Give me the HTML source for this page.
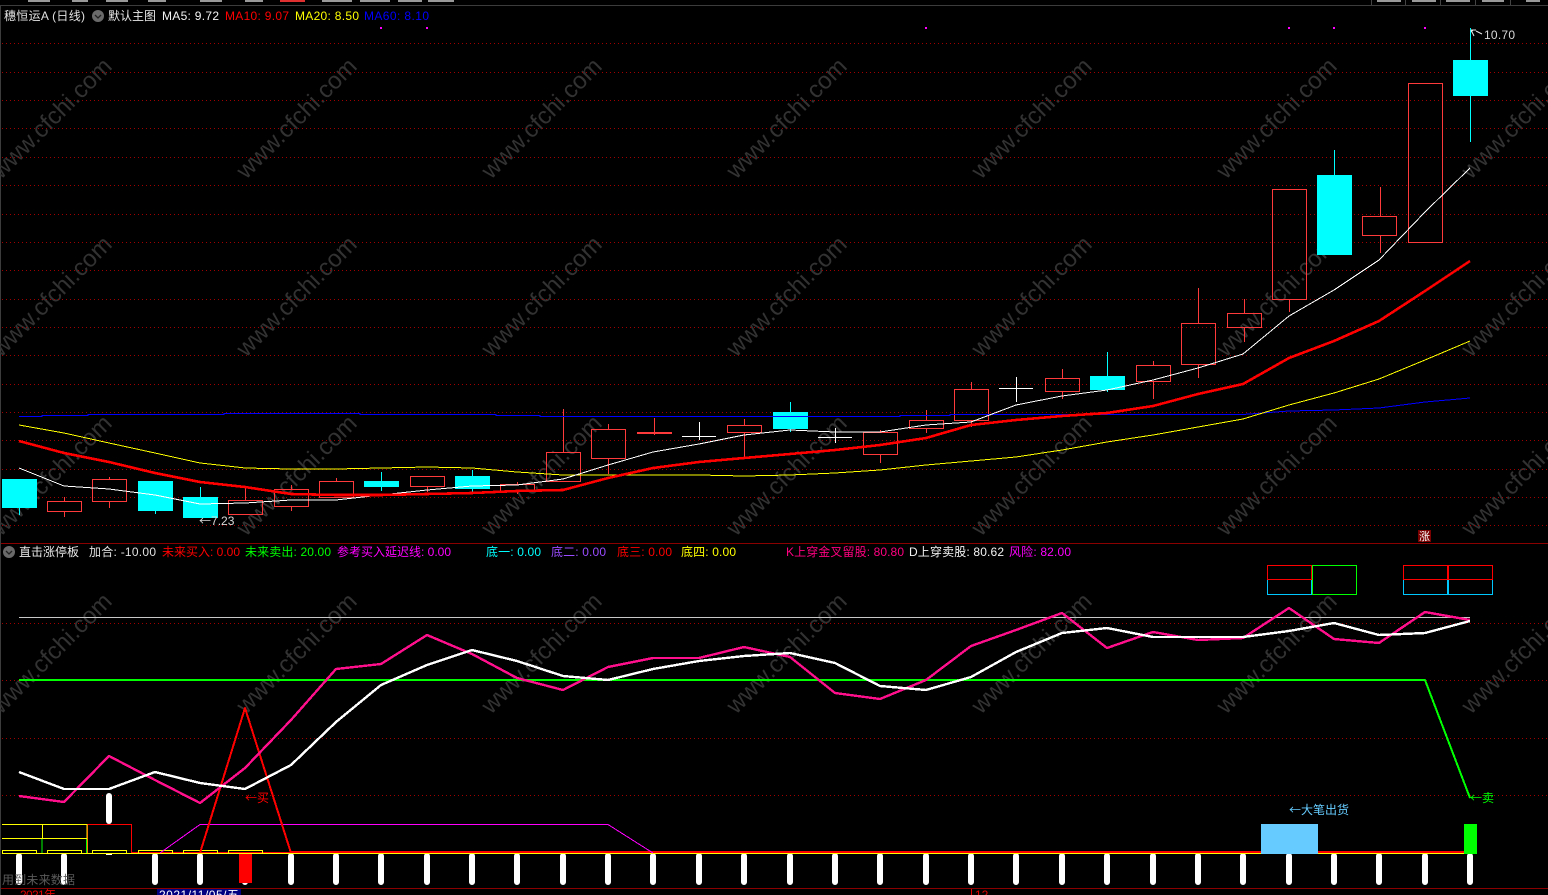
<!DOCTYPE html>
<html>
<head>
<meta charset="utf-8">
<title>chart</title>
<style>
html,body{margin:0;padding:0;background:#000;width:1548px;height:895px;overflow:hidden}
svg{display:block;position:absolute;left:0;top:0}
text{font-family:"Liberation Sans","Noto Sans CJK SC",sans-serif;font-size:12px}
.wm text{font-size:24px;fill:#323232}
.ar{font-family:"Noto Sans CJK SC",sans-serif}
</style>
</head>
<body>
<svg width="1548" height="895" viewBox="0 0 1548 895">
<rect width="1548" height="895" fill="#000"/>

<!-- top strip -->
<g shape-rendering="crispEdges">
<rect x="0" y="5" width="1548" height="1" fill="#3c3c3c"/>
<rect x="0" y="6" width="1" height="889" fill="#3c3c3c"/>
<g fill="#999">
<rect x="28" y="0" width="22" height="2"/><rect x="72" y="0" width="16" height="2"/><rect x="106" y="0" width="22" height="2"/><rect x="148" y="0" width="18" height="2"/><rect x="200" y="0" width="22" height="2"/><rect x="245" y="0" width="18" height="2"/>
<rect x="322" y="0" width="30" height="2"/><rect x="360" y="0" width="30" height="2"/><rect x="398" y="0" width="24" height="2"/><rect x="428" y="0" width="26" height="2"/>
<rect x="1377" y="0" width="24" height="2"/><rect x="1412" y="0" width="24" height="2"/><rect x="1446" y="0" width="24" height="2"/><rect x="1482" y="0" width="22" height="2"/><rect x="1526" y="0" width="14" height="2"/>
</g>
<rect x="280" y="0" width="25" height="2" fill="#e03030"/>
<g fill="#444"><rect x="1371" y="0" width="1" height="5"/><rect x="1405" y="0" width="1" height="5"/><rect x="1440" y="0" width="1" height="5"/><rect x="1475" y="0" width="1" height="5"/><rect x="1510" y="0" width="1" height="5"/></g>
</g>

<!-- watermark -->
<g class="wm">
<text transform="translate(1,180) rotate(-45)">www.cfchi.com</text>
<text transform="translate(246,180) rotate(-45)">www.cfchi.com</text>
<text transform="translate(491,180) rotate(-45)">www.cfchi.com</text>
<text transform="translate(736,180) rotate(-45)">www.cfchi.com</text>
<text transform="translate(981,180) rotate(-45)">www.cfchi.com</text>
<text transform="translate(1226,180) rotate(-45)">www.cfchi.com</text>
<text transform="translate(1471,180) rotate(-45)">www.cfchi.com</text>
<text transform="translate(1,358) rotate(-45)">www.cfchi.com</text>
<text transform="translate(246,358) rotate(-45)">www.cfchi.com</text>
<text transform="translate(491,358) rotate(-45)">www.cfchi.com</text>
<text transform="translate(736,358) rotate(-45)">www.cfchi.com</text>
<text transform="translate(981,358) rotate(-45)">www.cfchi.com</text>
<text transform="translate(1226,358) rotate(-45)">www.cfchi.com</text>
<text transform="translate(1471,358) rotate(-45)">www.cfchi.com</text>
<text transform="translate(1,537) rotate(-45)">www.cfchi.com</text>
<text transform="translate(246,537) rotate(-45)">www.cfchi.com</text>
<text transform="translate(491,537) rotate(-45)">www.cfchi.com</text>
<text transform="translate(736,537) rotate(-45)">www.cfchi.com</text>
<text transform="translate(981,537) rotate(-45)">www.cfchi.com</text>
<text transform="translate(1226,537) rotate(-45)">www.cfchi.com</text>
<text transform="translate(1471,537) rotate(-45)">www.cfchi.com</text>
<text transform="translate(1,715) rotate(-45)">www.cfchi.com</text>
<text transform="translate(246,715) rotate(-45)">www.cfchi.com</text>
<text transform="translate(491,715) rotate(-45)">www.cfchi.com</text>
<text transform="translate(736,715) rotate(-45)">www.cfchi.com</text>
<text transform="translate(981,715) rotate(-45)">www.cfchi.com</text>
<text transform="translate(1226,715) rotate(-45)">www.cfchi.com</text>
<text transform="translate(1471,715) rotate(-45)">www.cfchi.com</text>
</g>

<!-- grid -->
<g shape-rendering="crispEdges">
<path stroke="#a00000" stroke-dasharray="1 3" fill="none" d="M2 43.5H1548M2 72.5H1548M2 100.5H1548M2 128.5H1548M2 157.5H1548M2 185.5H1548M2 214.5H1548M2 242.5H1548M2 270.5H1548M2 299.5H1548M2 327.5H1548M2 355.5H1548M2 384.5H1548M2 412.5H1548M2 440.5H1548M2 469.5H1548M2 497.5H1548M2 525.5H1548M2 623.5H1548M2 680.5H1548M2 738.5H1548M2 795.5H1548"/>
<rect x="1" y="543" width="1547" height="1" fill="#8a0000"/>
<rect x="1" y="888" width="1547" height="1" fill="#8a0000"/>
<g fill="#ff00ff"><rect x="380" y="27" width="2" height="2"/><rect x="426" y="27" width="2" height="2"/><rect x="925" y="27" width="2" height="2"/><rect x="1288" y="27" width="2" height="2"/><rect x="1333" y="27" width="2" height="2"/><rect x="1424" y="27" width="2" height="2"/></g>
</g>

<!-- candles -->
<g shape-rendering="crispEdges">
<path fill="none" stroke="#ff3a3a" d="M64.5 497V501M64.5 511V517M109.5 477V479M109.5 501V508M245.5 486V500M291.5 485V489M291.5 506V511M336.5 478V481M336.5 497V498M427.5 476V477M427.5 487V492M517.5 482V484M517.5 491V494M563.5 409V452M608.5 424V429M608.5 458V474M654.5 418V432M654.5 434V435M744.5 419V425M744.5 432V457M880.5 430V432M880.5 454V463M926.5 410V420M926.5 428V433M971.5 382V389M971.5 420V427M1062.5 369V378M1062.5 391V399M1153.5 361V365M1153.5 381V399M1198.5 288V323M1198.5 364V378M1244.5 299V313M1244.5 327V342M1289.5 299V312M1380.5 187V216M1380.5 235V253"/>
<g fill="none" stroke="#ff3a3a">
<rect x="47.5" y="501.5" width="34" height="10"/>
<rect x="92.5" y="479.5" width="34" height="22"/>
<rect x="228.5" y="500.5" width="34" height="14"/>
<rect x="274.5" y="489.5" width="34" height="17"/>
<rect x="319.5" y="481.5" width="34" height="16"/>
<rect x="410.5" y="476.5" width="34" height="10"/>
<rect x="500.5" y="484.5" width="34" height="7"/>
<rect x="546.5" y="452.5" width="34" height="29"/>
<rect x="591.5" y="429.5" width="34" height="29"/>
<rect x="727.5" y="425.5" width="34" height="7"/>
<rect x="863.5" y="432.5" width="34" height="22"/>
<rect x="909.5" y="420.5" width="34" height="8"/>
<rect x="954.5" y="389.5" width="34" height="31"/>
<rect x="1045.5" y="378.5" width="34" height="13"/>
<rect x="1136.5" y="365.5" width="34" height="16"/>
<rect x="1181.5" y="323.5" width="34" height="41"/>
<rect x="1227.5" y="313.5" width="34" height="14"/>
<rect x="1272.5" y="189.5" width="34" height="110"/>
<rect x="1362.5" y="216.5" width="34" height="19"/>
<rect x="1408.5" y="83.5" width="34" height="159"/>
</g>
<rect x="637" y="432" width="35" height="2" fill="#ff3a3a"/>
<path fill="none" stroke="#00ffff" d="M19.5 508V515M155.5 511V514M200.5 487V497M381.5 472V491M472.5 470V492M790.5 402V432M1107.5 352V392M1334.5 150V175M1470.5 28V142"/>
<g fill="#00ffff">
<rect x="2" y="479" width="35" height="29"/>
<rect x="138" y="481" width="35" height="30"/>
<rect x="183" y="497" width="35" height="21"/>
<rect x="364" y="481" width="35" height="6"/>
<rect x="455" y="476" width="35" height="13"/>
<rect x="773" y="412" width="35" height="17"/>
<rect x="1090" y="376" width="35" height="14"/>
<rect x="1317" y="175" width="35" height="80"/>
<rect x="1453" y="60" width="35" height="36"/>
</g>
<path fill="none" stroke="#fff" d="M682 436.5H716M699.5 422V440M818 437.5H852M835.5 428V443M999 388.5H1033M1016.5 377V402"/>
</g>

<!-- MA lines -->
<g fill="none" shape-rendering="crispEdges" stroke-linejoin="round">
<path stroke="#0000ff" d="M19 416.5H42V415.5H88V414.5H224V413.5H360V414.5H496V415.5H540V416.5H900V415.5H950V414.5H1243L1289 411L1334 410L1379 408L1425 402L1470 398"/>
<polyline stroke="#ffff00" stroke-width="1" points="19,425 64,433 109,443 155,453 200,463 245,468 291,469 336,469 381,468 427,467 472,468 517,472 563,475 608,475 653,475 699,475 744,476 790,475 835,473 880,470 926,465 971,461 1016,457 1062,450 1107,442 1153,435 1198,427 1243,419 1289,405 1334,393 1379,379 1425,360 1470,341"/>
<polyline stroke="#ffffff" stroke-width="1" points="19,468 64,486 109,489 155,495 200,504 245,503 291,500 336,500 381,495 427,490 472,486 517,485 563,479 608,465 653,452 699,444 744,435 790,430 835,432 880,432 926,425 971,422 1016,405 1062,396 1107,390 1153,380 1198,368 1243,354 1289,316 1334,290 1379,260 1425,212 1470,168"/>
<polyline stroke="#ff0000" stroke-width="2.6" points="19,441 64,453 109,462 155,473 200,482 245,487 291,494 336,495 381,495 427,494 472,493 517,491 563,490 608,478 653,468 699,462 744,458 790,454 835,450 880,445 926,438 971,425 1016,420 1062,416 1107,413 1153,406 1198,394 1243,384 1289,358 1334,341 1379,321 1425,291 1470,261"/>
</g>

<!-- price labels -->
<path fill="none" stroke="#e8e8e8" d="M1471 30H1476M1471 32L1473 30M1476 31L1482 34M1471 30L1474 36"/>
<text x="1484" y="39" fill="#d8d8d8" textLength="31">10.70</text>
<text x="199" y="525" fill="#d8d8d8"><tspan class="ar">←</tspan>7.23</text>
<rect x="1418" y="530" width="13" height="12" fill="#7a0000"/>
<text x="1419" y="540" fill="#fff" style="font-size:11px">涨</text>

<!-- header -->
<g>
<text x="4" y="20" fill="#e0e0e0" textLength="81">穗恒运A (日线)</text>
<circle cx="98" cy="16" r="6" fill="#6a6a6a"/>
<path d="M95 15l3 3l3-3" fill="none" stroke="#222" stroke-width="1.3"/>
<text x="108" y="20" fill="#e8e8e8" textLength="48">默认主图</text>
<text x="162" y="20" fill="#f4f4f4" textLength="57">MA5: 9.72</text>
<text x="225" y="20" fill="#ff0000" textLength="64">MA10: 9.07</text>
<text x="295" y="20" fill="#ffff00" textLength="64">MA20: 8.50</text>
<text x="364" y="20" fill="#0000ff" textLength="65">MA60: 8.10</text>
</g>

<!-- lower header -->
<g>
<circle cx="9" cy="552" r="6" fill="#6a6a6a"/>
<path d="M6 551l3 3l3-3" fill="none" stroke="#222" stroke-width="1.3"/>
<text x="19" y="556" fill="#e8e8e8" textLength="60">直击涨停板</text>
<text x="89" y="556" fill="#e0e0e0" textLength="67">加合: -10.00</text>
<text x="162" y="556" fill="#ff0000" textLength="78">未来买入: 0.00</text>
<text x="245" y="556" fill="#00ff00" textLength="86">未来卖出: 20.00</text>
<text x="337" y="556" fill="#ff00ff" textLength="114">参考买入延迟线: 0.00</text>
<text x="486" y="556" fill="#00ffff" textLength="55">底一: 0.00</text>
<text x="551" y="556" fill="#9a4cff" textLength="55">底二: 0.00</text>
<text x="617" y="556" fill="#ff0000" textLength="55">底三: 0.00</text>
<text x="681" y="556" fill="#ffff00" textLength="55">底四: 0.00</text>
<text x="786" y="556" fill="#ff0080" textLength="118">K上穿金叉留股: 80.80</text>
<text x="909" y="556" fill="#f4f4f4" textLength="95">D上穿卖股: 80.62</text>
<text x="1009" y="556" fill="#ff00ff" textLength="62">风险: 82.00</text>
</g>

<!-- signal boxes -->
<g fill="none" shape-rendering="crispEdges">
<path stroke="#00c8ff" d="M1267.5 579V594.5H1311.5V579M1403.5 579V594.5H1447.5V579M1448.5 579V594.5H1492.5V579"/>
<rect x="1267.5" y="565.5" width="44" height="14" stroke="#ff0000"/>
<rect x="1312.5" y="565.5" width="44" height="29" stroke="#00ff00"/>
<rect x="1403.5" y="565.5" width="44" height="14" stroke="#ff0000"/>
<rect x="1448.5" y="565.5" width="44" height="14" stroke="#ff0000"/>
</g>

<!-- bottom bars -->
<g fill="none" stroke="#fff" stroke-width="6" stroke-linecap="round">
<path d="M19 856V882M64 856V882M155 856V882M200 856V882M245 856V882M291 856V882M336 856V882M381 856V882M427 856V882M472 856V882M517 856V882M563 856V882M608 856V882M653 856V882M699 856V882M744 856V882M790 856V882M835 856V882M880 856V882M926 856V882M971 856V882M1016 856V882M1062 856V882M1107 856V882M1153 856V882M1198 856V882M1243 856V882M1289 856V882M1334 856V882M1379 856V882M1425 856V882M1470 856V882"/>
<path d="M109 796V821"/>
</g>
<g shape-rendering="crispEdges">
<rect x="106" y="853" width="6" height="2" fill="#fff"/>
<rect x="239" y="853" width="13" height="30" fill="#ff0000"/>
<rect x="2" y="853" width="1468" height="1" fill="#ffff00"/>
<rect x="131" y="852" width="1339" height="1" fill="#ff0000"/>
<rect x="291" y="851" width="1179" height="2" fill="#ff0000"/>
<rect x="1261" y="824" width="57" height="30" fill="#66ccff"/>
<rect x="1464" y="824" width="13" height="30" fill="#00ff00"/>
<path fill="none" stroke="#ff0000" d="M87.5 853V824.5H131.5V853"/>
<path fill="none" stroke="#ffff00" d="M2 824.5H87M2 838.5H87M42.5 824V838M87 824V853"/>
<path fill="none" stroke="#00ff00" d="M42 839V853M86.5 839V853"/>
<path fill="none" stroke="#ffff00" d="M2.5 853V850.5H36.5V853M47.5 853V850.5H81.5V853M92.5 853V850.5H126.5V853M138.5 853V850.5H172.5V853M183.5 853V850.5H217.5V853M228.5 853V850.5H262.5V853"/>
</g>

<!-- indicator lines -->
<g fill="none" shape-rendering="crispEdges" stroke-linejoin="round">
<path stroke="#c8c8c8" d="M19 617.5H1470"/>
<polyline stroke="#ff00ff" stroke-width="1" points="160,853 200,824.5 608,824.5 653,853"/>
<polyline stroke="#00ff00" stroke-width="2" points="19,680 1425,680 1470,798"/>
<polyline stroke="#ff0000" stroke-width="2" points="200,853 245,708 291,853"/>
<polyline stroke="#ff0f8c" stroke-width="2.4" points="19,796 64,802 109,756 155,780 200,803 245,768 291,720 336,669 381,664 427,635 472,654 517,678 563,690 608,667 653,658 699,658 744,647 790,657 835,693 880,699 926,680 971,646 1016,630 1062,613 1107,648 1153,632 1198,640 1243,638 1289,608 1334,639 1379,643 1425,612 1470,620"/>
<polyline stroke="#ffffff" stroke-width="2.4" points="19,772 64,789 109,789 155,772 200,783 245,789 291,765 336,722 381,685 427,665 472,650 517,661 563,676 608,680 653,669 699,661 744,656 790,653 835,663 880,686 926,690 971,677 1016,652 1062,633 1107,628 1153,637 1198,637 1243,637 1289,631 1334,623 1379,635 1425,633 1470,621"/>
</g>

<!-- signal labels -->
<text x="245" y="802" fill="#ff0000"><tspan class="ar">←</tspan>买</text>
<text x="1470" y="802" fill="#00ff00"><tspan class="ar">←</tspan>卖</text>
<text x="1289" y="814" fill="#66ccff"><tspan class="ar">←</tspan>大笔出货</text>
<text x="2" y="884" fill="#5a5a5a" textLength="73">用到未来数据</text>

<!-- time axis -->
<rect x="157" y="889" width="84" height="6" fill="#000080"/>
<text x="159" y="899" fill="#fff" textLength="80">2021/11/05/五</text>
<text x="20" y="899" fill="#e00000" textLength="36">2021年</text>
<path d="M971.5 889V895" stroke="#e00000"/>
<text x="975" y="899" fill="#e00000">12</text>
</svg>
</body>
</html>
